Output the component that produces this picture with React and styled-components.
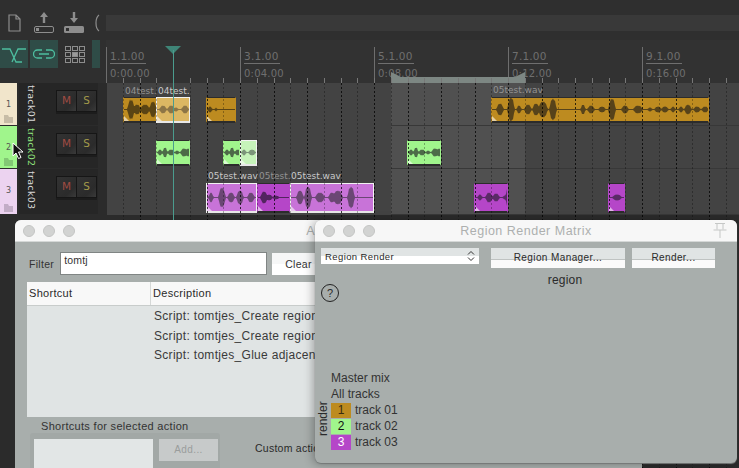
import React from 'react'
import styled, {createGlobalStyle} from 'styled-components'

const Global = createGlobalStyle`
html, body {
  margin: 0;
  width: 739px;
  height: 468px;
  overflow: hidden;
  background: #2b2b2b;
}
`

const Page = styled.div`
position: relative;
width: 739px;
height: 468px;
overflow: hidden;
background: #2b2b2b;
font-family: "Liberation Sans", Arial, sans-serif;
`

// reaper main window
const TopBar = styled.div`
display: flex;
align-items: center;
height: 40px;
background: #2f2f2f;
box-sizing: border-box;
padding: 6px 0 0 8px;
`
const TopIcons = styled.div`
display: flex;
align-items: center;
width: 98px;
gap: 10px;
overflow: hidden;
flex: none;
`
const TopStrip = styled.div`
flex: 1;
height: 16px;
background: #393939;
`
const ToolRow = styled.div`
display: flex;
height: 43px;
background: #2f2f2f;
`
const ToolButtons = styled.div`
display: flex;
width: 106px;
height: 28px;
gap: 2px;
flex: none;
overflow: hidden;
`
const ToolButton = styled.div`
width: ${p => p.$w}px;
height: 28px;
flex: none;
background: ${p => (p.$on ? '#2f4c47' : 'transparent')};
display: flex;
align-items: center;
justify-content: center;
`
const Ruler = styled.div`
display: flex;
flex: 1;
background: #323232;
`
const Mark = styled.div`
position: relative;
width: 134px;
flex: none;
box-sizing: border-box;
margin-top: 7px;
border-left: 1px solid #6e6e6e;
padding: 3px 0 0 3px;
color: #6f6f6f;
font-family: "DejaVu Sans", sans-serif;
font-size: 10.5px;
letter-spacing: 0.2px;
`
const Measure = styled.div`
display: inline-block;
line-height: 13px;
padding-right: 1px;
border-bottom: 1px solid #6f6f6f;
`
const Time = styled.div`
margin-top: 3px;
line-height: 13px;
font-size: 10px;
`
const Body = styled.div`
display: flex;
align-items: flex-start;
height: 137px;
`
const TrackList = styled.div`
width: 107px;
flex: none;
display: flex;
flex-direction: column;
`
const TrackRow = styled.div`
display: flex;
height: ${p => p.$h}px;
margin-bottom: 1px;
`
const TrackNum = styled.div`
width: 17px;
flex: none;
position: relative;
background: ${p => p.$bg};
color: #555;
font-family: "DejaVu Sans", sans-serif;
font-size: 8px;
text-align: center;
padding-top: 17px;
box-sizing: border-box;
`
const Folder = styled.svg`
position: absolute;
left: 4px;
bottom: 2px;
`
const TrackPanel = styled.div`
width: 79px;
margin-left: 2px;
flex: none;
background: #262626;
display: flex;
padding-top: 7px;
box-sizing: border-box;
`
const TrackName = styled.div`
writing-mode: vertical-rl;
width: 14px;
margin-left: 5px;
height: 38px;
color: ${p => p.$c};
font-family: "DejaVu Sans", sans-serif;
font-size: 9.5px;
letter-spacing: 0.3px;
line-height: 14px;
white-space: nowrap;
margin-top: -5px;
`
const MuteSolo = styled.div`
display: flex;
margin-left: 18px;
height: 20px;
border: 1px solid #161616;
box-shadow: 0 2px 0 #1c1c1c;
`
const MsButton = styled.div`
width: 19px;
text-align: center;
line-height: 19px;
font-family: "DejaVu Sans", sans-serif;
font-size: 10.5px;
color: ${p => p.$c};
background: linear-gradient(135deg, #333 0%, #2b2b2b 70%, #3a3a3a 100%);
& + & {
  border-left: 1px solid #161616;
}
`
const Arrange = styled.div`
position: relative;
flex: 1;
height: 132px;
background: #434343;
`
const Lane = styled.div`
position: relative;
height: ${p => p.$h}px;
`
const LoopShade = styled.div`
position: absolute;
top: 0;
bottom: 0;
left: 284px;
width: 134px;
background: #505050;
`
const LoopBar = styled.div`
position: absolute;
top: -6px;
left: 284px;
width: 134px;
height: 6px;
background: #7d8783;
&::before, &::after {
  content: "";
  position: absolute;
  top: -5px;
  border-style: solid;
}
&::before {
  left: 0;
  border-width: 5px 0 0 10px;
  border-color: transparent transparent transparent #7d8783;
}
&::after {
  right: 0;
  border-width: 0 0 5px 10px;
  border-color: transparent transparent #7d8783 transparent;
}
`
const LaneLine = styled.div`
position: absolute;
left: 284px;
right: 0;
top: ${p => p.$y}px;
height: 1px;
background: #383838;
`
const GridSvg = styled.svg`
position: absolute;
left: 0;
top: -5px;
pointer-events: none;
`
const Clip = styled.div`
position: absolute;
box-sizing: border-box;
left: ${p => p.$x}px;
width: ${p => p.$w}px;
top: ${p => p.$top}px;
height: ${p => p.$h}px;
background: ${p => p.$bg};
border: 1px solid ${p => (p.$sel ? '#f2f2f2' : 'transparent')};
border-top-color: ${p => (p.$sel ? '#f2f2f2' : '#2c2c2c')};
border-bottom: 2px solid ${p => (p.$sel ? '#e8e8e8' : '#2c2c2c')};
overflow: hidden;
&::after {
  content: "";
  position: absolute;
  left: 0;
  bottom: 0;
  border-style: solid;
  border-width: 5px 0 0 5px;
  border-color: transparent transparent transparent rgba(255, 255, 255, 0.6);
}
`
const ClipLabel = styled.div`
position: absolute;
left: ${p => p.$x}px;
top: ${p => p.$top}px;
color: ${p => p.$c || '#929292'};
font-family: "DejaVu Sans", sans-serif;
font-size: 9px;
line-height: 11px;
white-space: nowrap;
`
const Playhead = styled.div`
position: absolute;
left: 173px;
top: 50px;
height: 170px;
width: 1px;
background: #4b9c8e;
z-index: 2;
`
const PlayTriangle = styled.div`
position: absolute;
left: 165px;
top: 46px;
width: 0;
height: 0;
border-style: solid;
border-width: 8px 8.5px 0 8.5px;
border-color: #3f8577 transparent transparent transparent;
z-index: 2;
`
const Cursor = styled.svg`
position: absolute;
left: 12px;
top: 142px;
z-index: 3;
`

// floating windows
const Win = styled.div`
position: absolute;
left: ${p => p.$x}px;
top: 220px;
width: ${p => p.$w}px;
height: ${p => p.$h}px;
z-index: ${p => p.$z};
display: flex;
flex-direction: column;
background: #a8aeac;
border-radius: 6px 6px 0 0;
border-bottom-left-radius: ${p => (p.$round ? 6 : 0)}px;
border-bottom-right-radius: ${p => (p.$round ? 6 : 0)}px;
box-shadow: ${p => (p.$round ? '-2px 1px 10px rgba(0,0,0,0.3), 0 1px 1px #8b908e' : 'none')};
overflow: hidden;
color: #2a2a2a;
& > * {
  flex-shrink: 0;
}
`
const TitleBar = styled.div`
position: relative;
height: 21px;
flex: none;
background: #f7f7f7;
border-bottom: 1px solid #d5d8d7;
display: flex;
align-items: center;
padding-left: 8px;
gap: 8px;
`
const Dot = styled.div`
width: 12px;
height: 12px;
border-radius: 50%;
background: #d2d3d2;
border: 0.5px solid #c4c5c4;
box-sizing: border-box;
`
const TitleText = styled.div`
position: absolute;
left: 0;
right: 0;
text-align: center;
color: #adb0af;
font-size: 12.5px;
letter-spacing: 0.5px;
`
const PinIcon = styled.svg`
position: absolute;
right: 9px;
top: 2px;
`
const FilterRow = styled.div`
display: flex;
align-items: center;
height: 23px;
margin: 10px 0 0 14px;
font-size: 10.5px;
letter-spacing: 0.3px;
color: #333;
`
const FilterInput = styled.div`
width: 207px;
height: 23px;
box-sizing: border-box;
margin-left: 6px;
background: #fff;
border: 1px solid #808584;
padding: 1px 3px;
font-size: 10.5px;
letter-spacing: 0.2px;
`
const ClearButton = styled.div`
width: 120px;
height: 22px;
margin-left: 5px;
background: linear-gradient(#f6f7f7 49%, #c9cccb 49%, #c9cccb 52%, #fff 52%);
line-height: 22px;
padding-left: 13px;
box-sizing: border-box;
font-size: 10.5px;
`
const Table = styled.div`
width: 500px;
height: 135px;
margin: 7px 0 0 12px;
background: #e0e4e4;
`
const TableHead = styled.div`
display: flex;
height: 23px;
background: #f8f8f8;
border-bottom: 1px solid #c8cccb;
font-size: 11px;
letter-spacing: 0.3px;
line-height: 23px;
`
const HeadCell = styled.div`
width: ${p => p.$w}px;
padding-left: 2px;
box-sizing: border-box;
& + & {
  border-left: 1px solid #d5d8d7;
}
`
const ScriptRow = styled.div`
height: 19.5px;
line-height: 19.5px;
padding-left: 127px;
font-size: 12px;
letter-spacing: 0.3px;
white-space: nowrap;
color: #3a3a3a;
`
const RowsBox = styled.div`
padding-top: 1px;
`
const ShortcutTitle = styled.div`
margin: 2px 0 0 26px;
font-size: 11px;
letter-spacing: 0.3px;
line-height: 14px;
color: #333;
`
const ShortcutRow = styled.div`
display: flex;
align-items: flex-start;
`
const ShortcutBox = styled.div`
display: flex;
flex: none;
width: 190px;
height: 40px;
margin: 0 0 0 15px;
box-sizing: border-box;
padding: 6px 0 0 4px;
gap: 6px;
background: #a2a8a6;
border-radius: 3px;
`
const ShortcutList = styled.div`
width: 119px;
height: 40px;
background: #e2e6e6;
`
const AddButton = styled.div`
width: 59px;
height: 22px;
background: #c7caca;
color: #9a9d9c;
text-align: center;
font-size: 10px;
letter-spacing: 0.4px;
line-height: 22px;
`
const CustomLabel = styled.div`
margin: 9px 0 0 35px;
font-size: 10.5px;
letter-spacing: 0.25px;
white-space: nowrap;
`

const MatrixTop = styled.div`
display: flex;
align-items: flex-start;
margin: 6px 0 0 6px;
`
const SelectBox = styled.div`
display: flex;
justify-content: space-between;
align-items: center;
width: 158px;
height: 16px;
box-sizing: border-box;
padding: 0 4px;
background: linear-gradient(#e0e4e4 50%, #fff 50%);
font-size: 9.5px;
letter-spacing: 0.4px;
`
const MatrixButton = styled.div`
width: ${p => p.$w}px;
height: 20px;
margin-left: ${p => p.$ml}px;
background: linear-gradient(#e0e4e4 55%, #bfc3c2 55%, #bfc3c2 60%, #fafafa 60%);
text-align: center;
line-height: 20px;
font-size: 10px;
letter-spacing: 0.4px;
`
const MatrixMid = styled.div`
height: 15px;
`
const RegionLabel = styled.div`
margin: 4px 0 0 176px;
width: 148px;
text-align: center;
font-size: 12px;
letter-spacing: 0.2px;
line-height: 16px;
`
const Help = styled.div`
width: 18px;
height: 18px;
margin: 1px 0 0 6px;
box-sizing: border-box;
border: 1px solid #222;
border-radius: 50%;
text-align: center;
line-height: 16px;
font-size: 11px;
`
const MatrixBottom = styled.div`
display: flex;
align-items: flex-end;
margin-top: 68px;
padding-left: 2px;
`
const RenderLabel = styled.div`
writing-mode: vertical-rl;
transform: rotate(180deg);
font-size: 12px;
height: 37px;
width: 12px;
line-height: 12px;
margin: 0 2px 14px 0;
white-space: nowrap;
`
const MatrixList = styled.div`
display: flex;
flex-direction: column;
font-size: 12px;
color: #333;
`
const MatrixText = styled.div`
height: 16px;
line-height: 16px;
`
const MatrixTrack = styled.div`
display: flex;
align-items: center;
height: 16px;
gap: 4px;
`
const Chip = styled.div`
width: 20px;
height: 15px;
background: ${p => p.$bg};
color: ${p => p.$c};
text-align: center;
line-height: 15px;
font-size: 12px;
`

// builds a waveform outline from a few lumps [center px, half width px, amplitude px]
const Wave = ({w, h, lumps, color}) => {
    const mid = h / 2
    const amp = []
    for (let x = 0; x <= w; x += 1) {
        let a = 0.5
        lumps.forEach(([c, s, v]) => {
            const d = (x - c) / s
            a = Math.max(a, v * Math.exp(-d * d * d * d) * (0.82 + 0.18 * Math.abs(Math.sin(x * 1.7 + c))))
        })
        amp.push(a)
    }
    const up = amp.map((a, x) => `${x},${(mid - a).toFixed(1)}`)
    const down = amp.map((a, x) => `${x},${(mid + a).toFixed(1)}`).reverse()
    return (
        <svg width={w} height={h} style={{display: 'block'}}>
            <polygon points={[...up, ...down].join(' ')} fill={color}/>
        </svg>
    )
}

const GOLD = '#bd8b20'
const GOLD_SEL = '#dcb763'
const GREEN = '#a0f58c'
const GREEN_SEL = '#c6f3ba'
const PURPLE = '#b546c8'
const PURPLE_SEL = '#c873d8'

const greenLumps = [[3, 2, 3], [8, 2, 5], [14, 3, 3], [20, 2, 2], [27, 3, 4], [31, 2, 4]]

const lanes = [
    {
        h: 43,
        labels: [
            {x: 18, top: 3, text: '04test.'},
            {x: 51, top: 3, text: '04test.', c: '#c9c9c9'},
            {x: 386, top: 2, text: '05test.wav'},
        ],
        clips: [
            {x: 16, w: 34, bg: GOLD, wave: '#5a4414', lumps: [[7, 3, 10], [13, 3, 5], [21, 4, 5], [29, 3, 8]]},
            {x: 49, w: 34, bg: GOLD_SEL, sel: true, wave: '#8d7546', lumps: [[6, 3, 4], [14, 3, 4], [19, 2, 2], [28, 3, 4]]},
            {x: 99, w: 30, bg: GOLD, wave: '#5a4414', lumps: [[3, 2, 3], [9, 1, 2]]},
            {
                x: 384, w: 218, bg: GOLD, wave: '#57431a',
                lumps: [[8, 3, 6], [19, 3, 12], [27, 2, 4], [36, 3, 5], [44, 3, 6], [51, 4, 8], [61, 3, 11],
                    [91, 2, 5], [99, 3, 4], [110, 3, 3], [120, 3, 11], [133, 3, 4], [146, 4, 4], [158, 2, 2],
                    [166, 3, 3], [173, 3, 3], [181, 2, 3], [189, 2, 3], [196, 3, 5], [205, 3, 3], [213, 3, 3]],
            },
        ],
    },
    {
        h: 43,
        clips: [
            {x: 49, w: 34, bg: GREEN, wave: '#4d6b48', lumps: greenLumps},
            {x: 116, w: 17, bg: GREEN, wave: '#4d6b48', lumps: greenLumps},
            {x: 133, w: 17, bg: GREEN_SEL, sel: true, wave: '#7c957a', lumps: [[3, 2, 3], [11, 3, 3]]},
            {x: 300, w: 34, bg: GREEN, wave: '#4d6b48', lumps: greenLumps},
        ],
    },
    {
        h: 46,
        labels: [
            {x: 101, top: 2, text: '05test.wav', c: '#c9c9c9'},
            {x: 152, top: 2, text: '05test.'},
            {x: 184, top: 2, text: '05test.wav', c: '#c9c9c9'},
        ],
        clips: [
            {x: 99, w: 51, bg: PURPLE_SEL, sel: true, wave: '#6b4774', lumps: [[4, 2, 5], [15, 3, 10], [24, 3, 5], [33, 3, 7], [44, 3, 5]]},
            {x: 150, w: 33, bg: PURPLE, wave: '#53245f', lumps: [[6, 3, 6], [11, 3, 3], [18, 3, 2]]},
            {x: 183, w: 84, bg: PURPLE_SEL, sel: true, wave: '#6b4774', lumps: [[9, 3, 7], [17, 3, 11], [29, 4, 5], [41, 3, 5], [47, 4, 7], [60, 3, 11]]},
            {x: 367, w: 34, bg: PURPLE, wave: '#5a2a66', lumps: [[5, 2, 3], [14, 3, 5], [21, 3, 4], [30, 2, 2], [33, 2, 10]]},
            {x: 501, w: 17, bg: PURPLE, wave: '#5a2a66', lumps: [[8, 4, 3]]},
        ],
    },
]

const CLIP_TOPS = [14, 14, 14]
const CLIP_HEIGHTS = [26, 26, 30]

const GridLines = () => {
    const lines = []
    for (let i = 0; i < 38; i += 1) {
        const x = Math.round(i * 16.75) - 0.5
        if (x < 0) continue
        const beat = i % 2 === 0
        const tick = i % 8 === 0
        lines.push(
            <g key={i}>
                <line x1={x} x2={x} y1={tick ? -20 : 0} y2={5} stroke="#777"/>
                <line x1={x} x2={x} y1={5} y2={390}
                      stroke={beat ? 'rgba(0,0,0,0.75)' : 'rgba(0,0,0,0.3)'} strokeDasharray="2 2"/>
            </g>
        )
    }
    return <GridSvg width={632} height={390}>{lines}</GridSvg>
}

const NewFileIcon = () => (
    <svg width="16" height="18" viewBox="0 0 16 18" fill="none" stroke="#8d8d8d" strokeWidth="1.2">
        <path d="M1 1h7l4 4v12H1z M8 1v4h4"/>
    </svg>
)
const UploadIcon = () => (
    <svg width="20" height="22" viewBox="0 0 20 22">
        <path d="M10 0l4 5h-2.800v6H8.800V5H6z" fill="#8d8d8d"/>
        <rect x="0.500" y="14.500" width="19" height="6" rx="1.500" fill="none" stroke="#8d8d8d"/>
        <rect x="2" y="16" width="3" height="3" fill="#8d8d8d"/>
    </svg>
)
const DownloadIcon = () => (
    <svg width="20" height="22" viewBox="0 0 20 22">
        <path d="M10 11l4-5h-2.800V0H8.800v6H6z" fill="#8d8d8d"/>
        <rect x="0" y="14" width="20" height="7" rx="1.500" fill="#8d8d8d"/>
        <rect x="2" y="16" width="3" height="3" fill="#2f2f2f"/>
    </svg>
)
const ArcIcon = () => (
    <svg width="6" height="18" viewBox="0 0 6 18" fill="none" stroke="#8d8d8d" strokeWidth="1.2">
        <path d="M5 1C1 4 1 14 5 17"/>
    </svg>
)
const RippleIcon = () => (
    <svg width="26" height="18" viewBox="0 0 26 18" fill="none" stroke="#4dbd9f" strokeWidth="1.300">
        <path d="M1 4h8l6 13h6 M25 4h-8L11 17"/>
    </svg>
)
const LinkIcon = () => (
    <svg width="22" height="10" viewBox="0 0 22 10" fill="none" stroke="#4dbd9f" strokeWidth="1.300">
        <path d="M9 1H4.500a3.500 3.500 0 0 0 0 8H9 M13 1h4.500a3.500 3.500 0 0 1 0 8H13 M6 5h10"/>
    </svg>
)
const GridIcon = () => {
    const cells = []
    for (let r = 0; r < 3; r += 1) {
        for (let c = 0; c < 3; c += 1) {
            const center = r === 1 && c === 1
            cells.push(
                <rect key={`${r}${c}`} x={c * 7 + 0.5} y={r * 6 + 0.5} width="5" height="4"
                      fill={center ? '#9a9a9a' : 'none'} stroke="#8d8d8d"/>
            )
        }
    }
    return <svg width="20" height="17" viewBox="0 0 20 17">{cells}</svg>
}

const tracks = [
    {n: 1, h: 42, bg: '#f1e5cb', folder: '#c7bca6', name: 'track01', c: '#d8d8d8'},
    {n: 2, h: 42, bg: '#a0f58c', folder: '#82c874', name: 'track02', c: '#8fe07c'},
    {n: 3, h: 45, bg: '#ecd3f0', folder: '#c2adc6', name: 'track03', c: '#d8d8d8'},
]

const App = () => {
    return (
        <Page>
            <Global/>
            <TopBar>
                <TopIcons>
                    <NewFileIcon/>
                    <UploadIcon/>
                    <DownloadIcon/>
                    <ArcIcon/>
                </TopIcons>
                <TopStrip/>
            </TopBar>
            <ToolRow>
                <ToolButtons>
                    <ToolButton $w={28} $on><RippleIcon/></ToolButton>
                    <ToolButton $w={28} $on><LinkIcon/></ToolButton>
                    <ToolButton $w={30}><GridIcon/></ToolButton>
                    <ToolButton $w={8} $on/>
                </ToolButtons>
                <Ruler>
                    {[['1.1.00', '0:00.00'], ['3.1.00', '0:04.00'], ['5.1.00', '0:08.00'], ['7.1.00', '0:12.00'], ['9.1.00', '0:16.00']].map(([m, t]) => (
                        <Mark key={m}>
                            <Measure>{m}</Measure>
                            <Time>{t}</Time>
                        </Mark>
                    ))}
                </Ruler>
            </ToolRow>
            <Body>
                <TrackList>
                    {tracks.map(t => (
                        <TrackRow key={t.n} $h={t.h}>
                            <TrackNum $bg={t.bg}>
                                {t.n}
                                <Folder width="9" height="8" viewBox="0 0 9 8">
                                    <path d="M0 8V0h4l1 2h4v6z" fill={t.folder}/>
                                </Folder>
                            </TrackNum>
                            <TrackPanel>
                                <TrackName $c={t.c}>{t.name}</TrackName>
                                <MuteSolo>
                                    <MsButton $c="#a04b42">M</MsButton>
                                    <MsButton $c="#a39a4a">S</MsButton>
                                </MuteSolo>
                            </TrackPanel>
                        </TrackRow>
                    ))}
                </TrackList>
                <Arrange>
                    <LoopShade/>
                    <LoopBar/>
                    <LaneLine $y={42}/>
                    <LaneLine $y={85}/>
                    <LaneLine $y={131}/>
                    {lanes.map((lane, i) => (
                        <Lane key={i} $h={lane.h}>
                            {(lane.labels || []).map(l => (
                                <ClipLabel key={l.x} $x={l.x} $top={l.top} $c={l.c}>{l.text}</ClipLabel>
                            ))}
                            {lane.clips.map(c => (
                                <Clip key={c.x} $x={c.x} $w={c.w} $top={CLIP_TOPS[i]} $h={CLIP_HEIGHTS[i]} $bg={c.bg} $sel={c.sel}>
                                    <Wave w={c.w} h={CLIP_HEIGHTS[i] - 3} lumps={c.lumps} color={c.wave}/>
                                </Clip>
                            ))}
                        </Lane>
                    ))}
                    <GridLines/>
                </Arrange>
            </Body>
            <PlayTriangle/>
            <Playhead/>
            <Cursor width="13" height="18" viewBox="0 0 13 18">
                <path d="M1 1v13l3-3 2.500 5.500 2.500-1-2.500-5.500h4.500z" fill="#111" stroke="#fff" strokeWidth="1"/>
            </Cursor>

            <Win $x={15} $w={627} $h={248} $z={4}>
                <TitleBar>
                    <Dot/><Dot/><Dot/>
                    <TitleText>Actions</TitleText>
                </TitleBar>
                <FilterRow>
                    Filter
                    <FilterInput>tomtj</FilterInput>
                    <ClearButton>Clear</ClearButton>
                </FilterRow>
                <Table>
                    <TableHead>
                        <HeadCell $w={123}>Shortcut</HeadCell>
                        <HeadCell $w={300}>Description</HeadCell>
                    </TableHead>
                    <RowsBox>
                        <ScriptRow>Script: tomtjes_Create regions from items</ScriptRow>
                        <ScriptRow>Script: tomtjes_Create regions from selection</ScriptRow>
                        <ScriptRow>Script: tomtjes_Glue adjacent items</ScriptRow>
                    </RowsBox>
                </Table>
                <ShortcutTitle>Shortcuts for selected action</ShortcutTitle>
                <ShortcutRow>
                    <ShortcutBox>
                        <ShortcutList/>
                        <AddButton>Add...</AddButton>
                    </ShortcutBox>
                    <CustomLabel>Custom action...</CustomLabel>
                </ShortcutRow>
            </Win>

            <Win $x={315} $w={422} $h={243} $z={5} $round>
                <TitleBar>
                    <Dot/><Dot/><Dot/>
                    <TitleText>Region Render Matrix</TitleText>
                    <PinIcon width="16" height="17" viewBox="0 0 16 17" fill="none" stroke="#c5c7c6">
                        <path d="M3 1.500h10 M5 1.500v6 M11 1.500v6 M1.500 8h13 M8 8v8"/>
                    </PinIcon>
                </TitleBar>
                <MatrixTop>
                    <SelectBox>
                        Region Render
                        <svg width="8" height="12" viewBox="0 0 8 12" fill="none" stroke="#333">
                            <path d="M1 4.500L4 1.500l3 3 M1 7.500l3 3 3-3"/>
                        </svg>
                    </SelectBox>
                    <MatrixButton $w={134} $ml={12}>Region Manager...</MatrixButton>
                    <MatrixButton $w={83} $ml={7}>Render...</MatrixButton>
                </MatrixTop>
                <MatrixMid>
                    <RegionLabel>region</RegionLabel>
                </MatrixMid>
                <Help>?</Help>
                <MatrixBottom>
                    <RenderLabel>render</RenderLabel>
                    <MatrixList>
                        <MatrixText>Master mix</MatrixText>
                        <MatrixText>All tracks</MatrixText>
                        <MatrixTrack><Chip $bg="#bd8b20" $c="#3a2c10">1</Chip>track 01</MatrixTrack>
                        <MatrixTrack><Chip $bg="#a0f58c" $c="#111">2</Chip>track 02</MatrixTrack>
                        <MatrixTrack><Chip $bg="#b546c8" $c="#fff">3</Chip>track 03</MatrixTrack>
                    </MatrixList>
                </MatrixBottom>
            </Win>
        </Page>
    )
}

export default App
